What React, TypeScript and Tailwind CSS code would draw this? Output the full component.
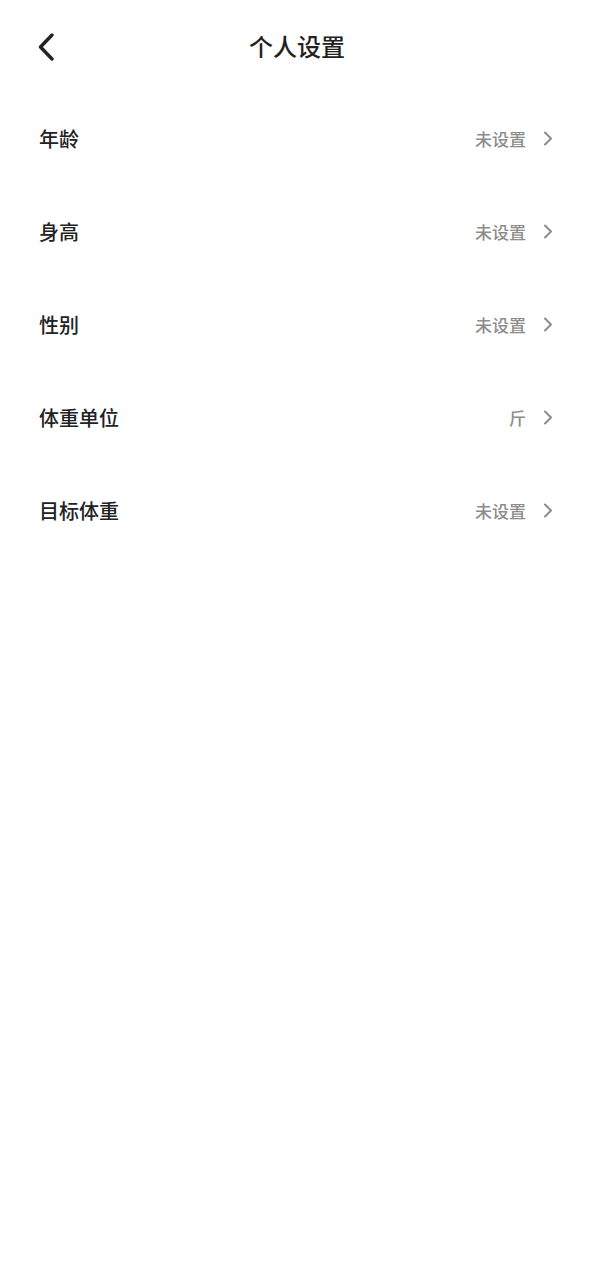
const rows = [
  { label: "年龄", value: "未设置" },
  { label: "身高", value: "未设置" },
  { label: "性别", value: "未设置" },
  { label: "体重单位", value: "斤" },
  { label: "目标体重", value: "未设置" },
];

export default function App() {
  return (
    <main
      className="min-h-screen w-full bg-white text-[#222]"
      style={{ fontFamily: '"Noto Sans CJK SC", "Noto Sans", sans-serif' }}
    >
      {/* header */}
      <div className="relative flex h-[92px] items-center justify-center">
        <button className="absolute left-[36px] top-[32px] flex h-[30px] w-[20px] items-center justify-center">
          <svg width="18" height="28" viewBox="0 0 18 28" fill="none">
            <path
              d="M15 2 L3.5 14 L15 26"
              stroke="#222"
              strokeWidth="3.4"
              strokeLinecap="round"
              strokeLinejoin="round"
            />
          </svg>
        </button>
        <h1 className="text-[24px] font-medium leading-none">个人设置</h1>
      </div>

      {/* rows */}
      <div className="flex flex-col">
        {rows.map((row) => (
          <div
            key={row.label}
            className="flex h-[93px] items-center justify-between pl-[39px] pr-[41px]"
          >
            <span className="text-[20px] font-medium leading-none">
              {row.label}
            </span>
            <div className="flex items-center gap-[17px]">
              <span className="text-[17px] font-medium leading-none text-[#8c8c8c]">
                {row.value}
              </span>
              <svg width="10" height="15" viewBox="0 0 10 15" fill="none">
                <path
                  d="M2 1.5 L8 7.5 L2 13.5"
                  stroke="#8c8c8c"
                  strokeWidth="2"
                  strokeLinecap="round"
                  strokeLinejoin="round"
                />
              </svg>
            </div>
          </div>
        ))}
      </div>
    </main>
  );
}
